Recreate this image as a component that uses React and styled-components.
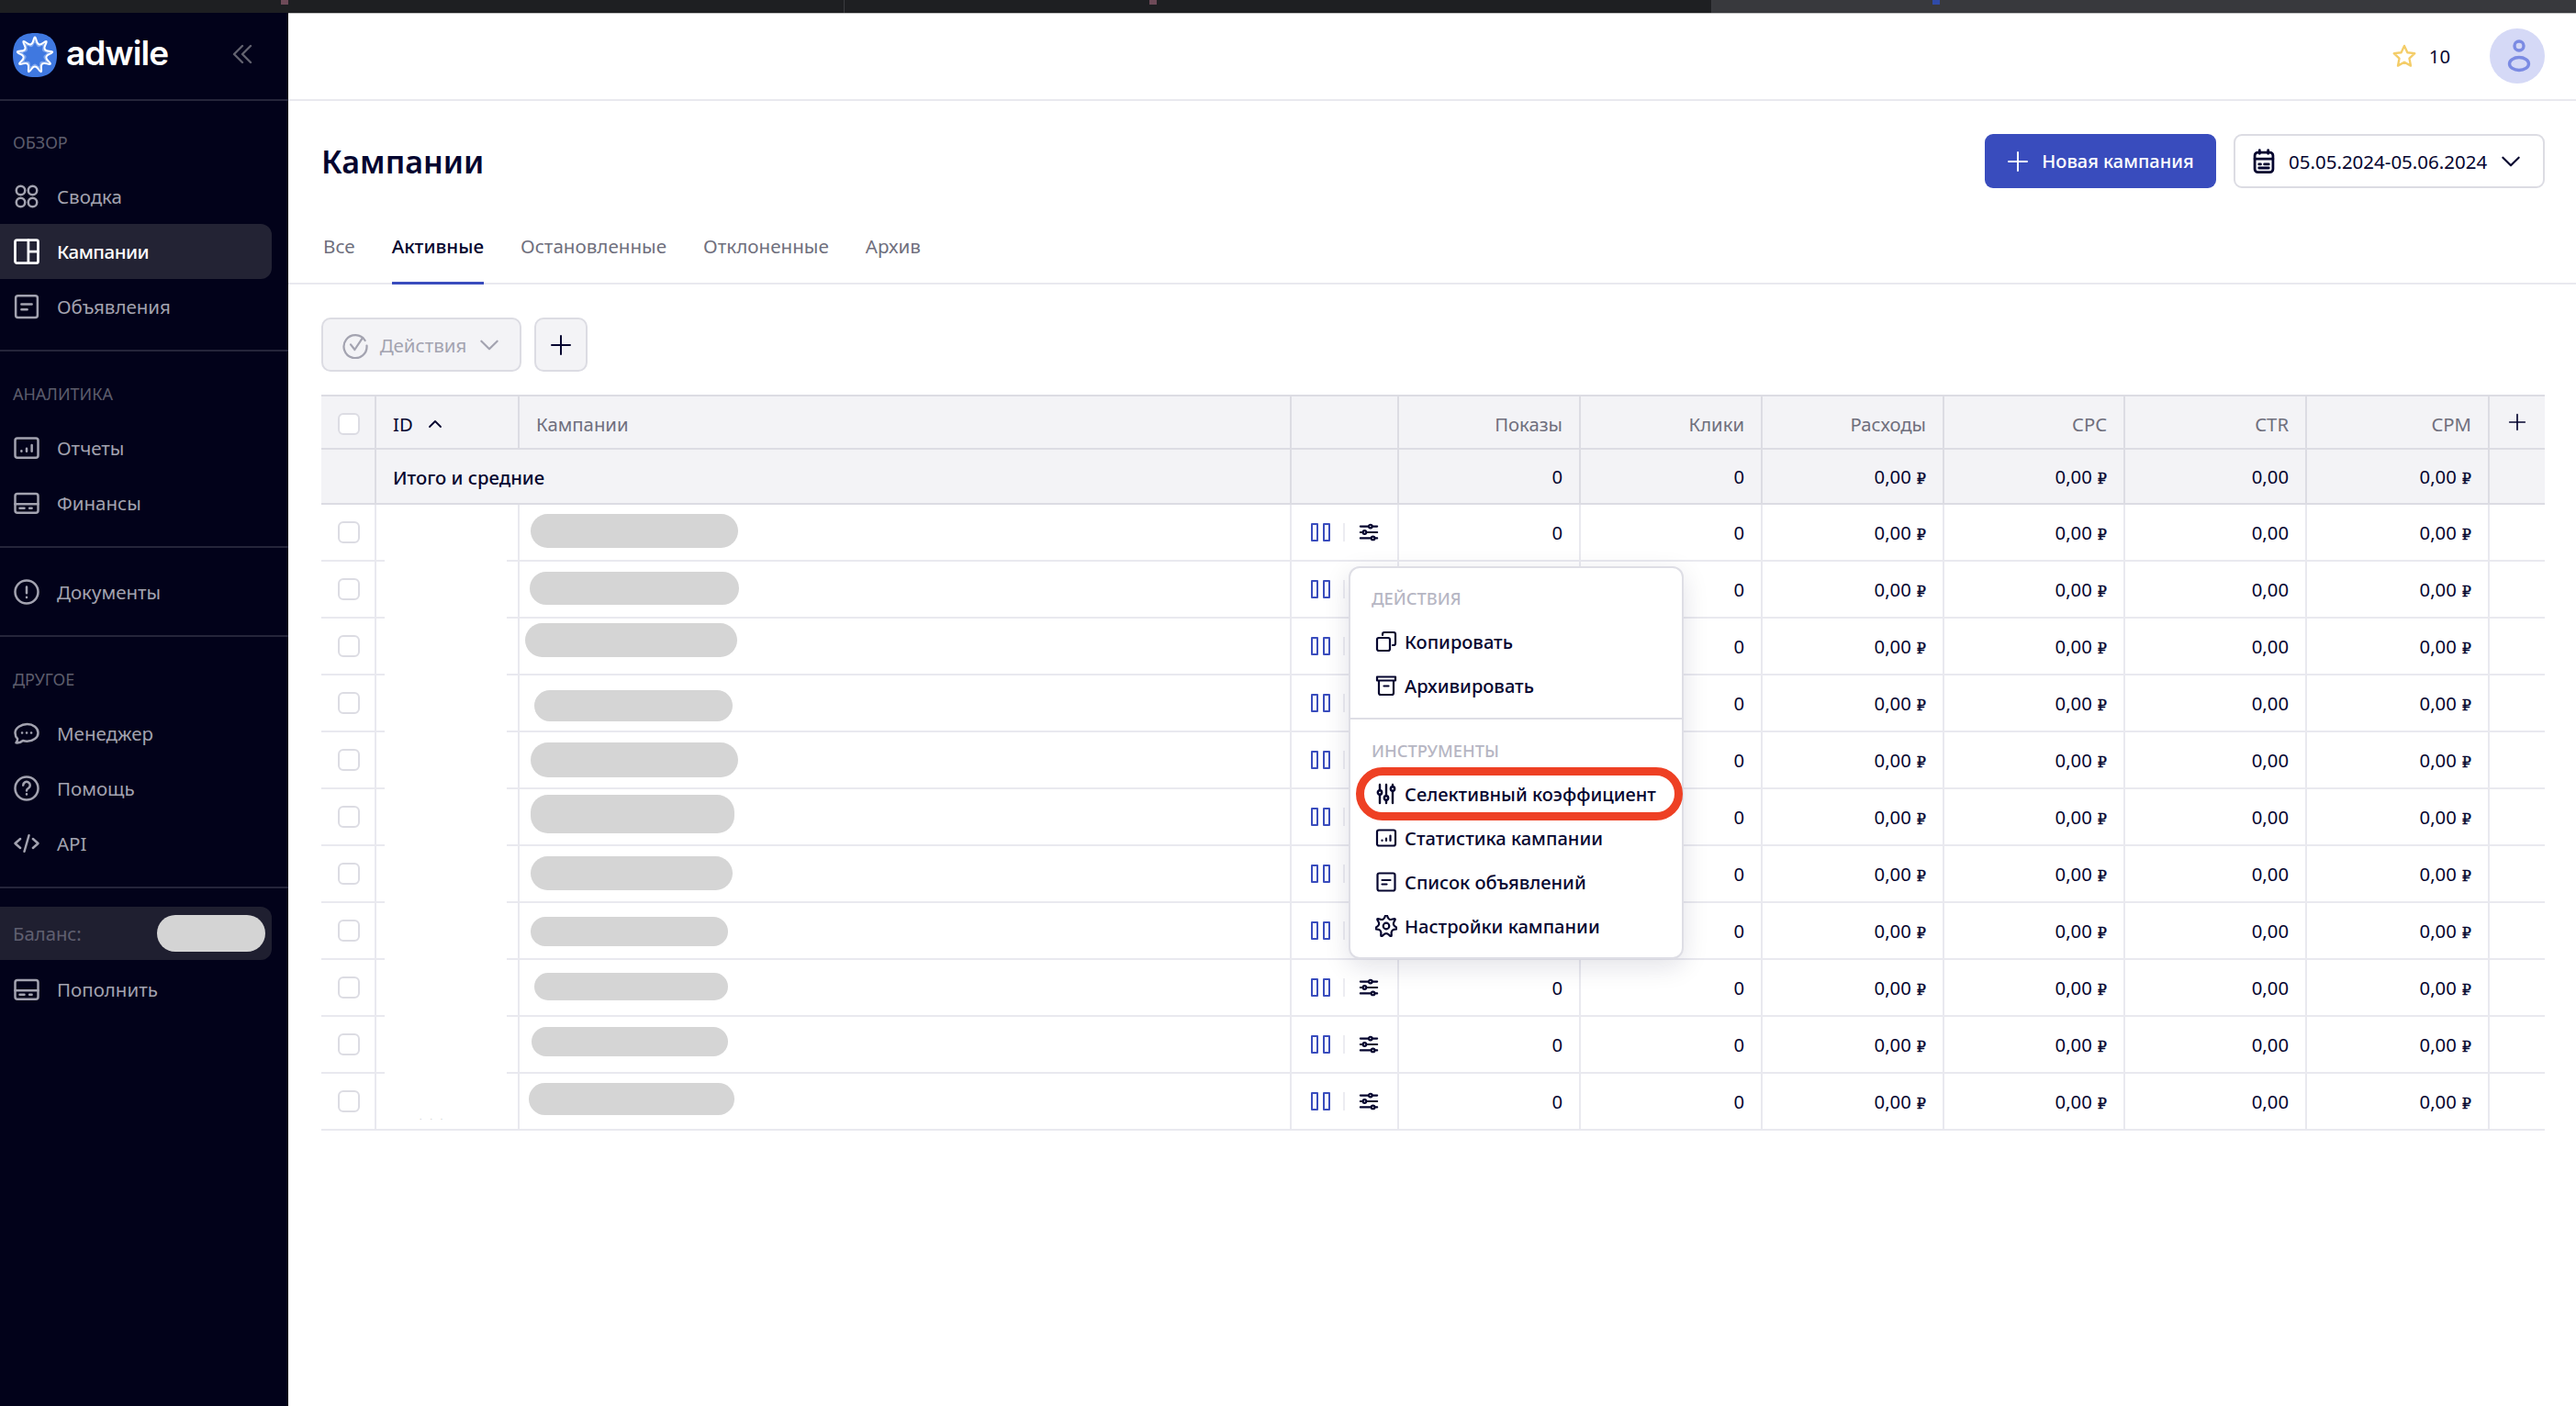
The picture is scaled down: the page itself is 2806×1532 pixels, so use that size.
import React from 'react';
import styled, { createGlobalStyle } from 'styled-components';

const GlobalStyle = createGlobalStyle`
  html, body {
    margin: 0;
    padding: 0;
    background: #ffffff;
  }
  * {
    box-sizing: border-box;
  }
  body {
    font-family: "Noto Sans", "Open Sans", sans-serif;
    font-size: 20.3px;
    color: #05052f;
  }
`;

const Page = styled.div`
  width: 2806px;
  height: 1532px;
  display: flex;
  flex-direction: column;
  overflow: hidden;
`;

const BrowserStrip = styled.div`
  height: 14px;
  flex: none;
  display: grid;
  grid-template-columns: 920px 945px 1fr;
`;

const BrowserTab = styled.div`
  padding-left: ${p => p.$markAt}px;
  background: ${p => (p.$light ? '#38393d' : '#1e1f22')};
  border-right: 1px solid #3a3b3f;
`;

const TabMark = styled.div`
  width: 8px;
  height: 5px;
  background: ${p => p.$color};
`;

const Body = styled.div`
  flex: 1;
  display: flex;
  min-height: 0;
`;

const Sidebar = styled.aside`
  width: 314px;
  flex: none;
  background: #02021a;
  color: #a3a3b0;
`;

const LogoBar = styled.div`
  height: 96px;
  padding: 22px 39px 0 14px;
  display: flex;
  align-items: flex-start;
  border-bottom: 2px solid #25253a;
`;

const Wordmark = styled.span`
  margin-left: 10px;
  font-family: "Inter", sans-serif;
  font-size: 37px;
  line-height: 44px;
  font-weight: 600;
  letter-spacing: -0.9px;
  color: #ffffff;
`;

const Collapse = styled.div`
  margin-left: auto;
  margin-top: 12px;
  color: #62626f;
  display: flex;
`;

const NavSection = styled.div`
  padding: ${p => p.$top}px 0 17px;
  border-bottom: 2px solid #25253a;
`;

const NavLabel = styled.div`
  height: 28px;
  margin-bottom: 15px;
  padding-left: 14px;
  font-size: 18px;
  line-height: 28px;
  color: #5d5d6c;
`;

const NavItem = styled.div`
  width: 296px;
  height: 60px;
  padding-left: 14px;
  display: flex;
  align-items: center;
  gap: 18px;
  font-size: 20.5px;
  font-weight: ${p => (p.$active ? 500 : 400)};
  letter-spacing: ${p => (p.$active ? '-0.5px' : '0')};
  color: ${p => (p.$active ? '#ffffff' : '#a3a3b0')};
  background: ${p => (p.$active ? '#232334' : 'transparent')};
  border-radius: 0 12px 12px 0;
`;

const BalanceRow = styled.div`
  width: 296px;
  height: 58px;
  margin: 20px 0 2px;
  padding: 0 7px 0 14px;
  display: flex;
  align-items: center;
  justify-content: space-between;
  background: #1f1f30;
  border-radius: 0 12px 12px 0;
  color: #5f5f70;
`;

const BalancePill = styled.div`
  width: 118px;
  height: 40px;
  background: #d4d4d4;
  border-radius: 20px;
`;

const Main = styled.main`
  flex: 1;
  min-width: 0;
`;

const TopBar = styled.div`
  height: 96px;
  padding-right: 34px;
  display: flex;
  align-items: center;
  justify-content: flex-end;
  border-bottom: 2px solid #e9e9ef;
  box-shadow: inset 0 1px 0 #c4c4c4;
`;

const Points = styled.div`
  display: flex;
  align-items: center;
  gap: 13px;
  margin-right: 43px;
`;

const Avatar = styled.div`
  width: 60px;
  height: 60px;
  padding-left: 4px;
  border-radius: 50%;
  background: #d5d9f6;
  display: flex;
  align-items: center;
  justify-content: center;
  color: #7b8be3;
`;

const PageHead = styled.div`
  height: 95px;
  padding: 36px 34px 0 36px;
  display: flex;
  align-items: flex-start;
  gap: 19px;
`;

const Title = styled.h1`
  margin: 0 auto 0 0;
  font-size: 34px;
  line-height: 60px;
  font-weight: 600;
  color: #05052f;
`;

const PrimaryButton = styled.button`
  width: 252px;
  height: 59px;
  border: 0;
  border-radius: 9px;
  background: #394cbd;
  color: #ffffff;
  font: 500 20px "Noto Sans", sans-serif;
  display: flex;
  align-items: center;
  justify-content: center;
  gap: 14px;
`;

const DateButton = styled.button`
  width: 339px;
  height: 59px;
  padding: 0 0 0 17px;
  border: 2px solid #dcdce3;
  border-radius: 9px;
  background: #ffffff;
  color: #05052f;
  font: 400 20.5px "Noto Sans", sans-serif;
  display: flex;
  align-items: center;
  gap: 13px;
`;

const Tabs = styled.div`
  height: 105px;
  padding-left: 38px;
  display: flex;
  align-items: flex-end;
  gap: 40px;
  border-bottom: 2px solid #e9e9ef;
`;

const Tab = styled.div`
  height: 67px;
  margin-bottom: -2px;
  font-size: 20.6px;
  line-height: 50px;
  color: ${p => (p.$active ? '#05052f' : '#6f6f7d')};
  font-weight: ${p => (p.$active ? 500 : 400)};
  border-bottom: 3px solid ${p => (p.$active ? '#394cbd' : 'transparent')};
`;

const Toolbar = styled.div`
  margin: 36px 0 25px 36px;
  display: flex;
  gap: 14px;
`;

const ToolButton = styled.button`
  width: ${p => p.$width}px;
  height: 59px;
  padding: 0;
  border: 2px solid #dcdce3;
  border-radius: 10px;
  background: #f3f3f6;
  color: ${p => (p.$dark ? '#05052f' : '#a3a3b0')};
  font: 400 20.5px "Noto Sans", sans-serif;
  display: flex;
  align-items: center;
  justify-content: center;
  gap: 12px;
`;

const Table = styled.div`
  position: relative;
  width: 2422px;
  margin-left: 36px;
  border-top: 2px solid #dcdce3;
`;

const Row = styled.div`
  display: grid;
  grid-template-columns: 60px 156px 841px 117px 198px 198px 198px 197px 198px 199px 60px;
  height: ${p => p.$height}px;
  background: ${p => (p.$shaded ? '#f3f3f6' : '#ffffff')};
`;

const Cell = styled.div`
  position: relative;
  display: flex;
  align-items: ${p => p.$align || 'center'};
  justify-content: ${p => p.$justify || 'flex-start'};
  padding: ${p => p.$padding || '0'};
  grid-column: span ${p => p.$span || 1};
  border-right: ${p => (p.$last ? '0' : `2px solid ${p.$shaded ? '#dcdce3' : '#e9e9ef'}`)};
  border-bottom: 2px solid ${p => (p.$shaded ? '#dcdce3' : '#e9e9ef')};
`;

const MaskedCell = styled(Cell)`
  &::after {
    content: ${p => (p.$masked ? '""' : 'none')};
    position: absolute;
    left: 9px;
    right: 12px;
    bottom: -2px;
    height: 2px;
    background: #ffffff;
  }
`;

const NumberCell = styled(Cell).attrs({ $justify: 'flex-end', $padding: '0 18px 0 0' })``;

const CheckCell = styled(Cell).attrs({ $justify: 'center' })`
  padding: ${p => (p.$raised ? '4px 0 0 2px' : '0 0 0 2px')};
`;

const HeadLabel = styled.span`
  padding-top: 4px;
  color: ${p => (p.$dark ? '#05052f' : '#6f6f7d')};
`;

const SortMark = styled.span`
  display: flex;
  margin-left: 15px;
  padding-top: 3px;
`;

const TotalLabel = styled.span`
  padding-top: 2px;
  font-weight: 500;
`;

const CheckBox = styled.div`
  width: 24px;
  height: 24px;
  border: 2px solid #dcdce3;
  border-radius: 6px;
  background: #ffffff;
`;

const Pill = styled.div`
  margin: ${p => p.$top}px 0 0 ${p => p.$left}px;
  width: ${p => p.$width}px;
  height: ${p => p.$height}px;
  background: #d5d5d5;
  border-radius: 19px;
`;

const FaintDots = styled.span`
  margin: 0 0 8px 47px;
  font-size: 9px;
  line-height: 10px;
  letter-spacing: 9px;
  color: #c9c9c9;
`;

const RowActions = styled.div`
  display: flex;
  align-items: center;
  padding-left: 21px;
  width: 100%;
`;

const PauseIcon = styled.div`
  display: flex;
  gap: 5px;
  &::before,
  &::after {
    content: "";
    box-sizing: border-box;
    width: 8px;
    height: 20px;
    border: 2px solid #394cbd;
    border-radius: 1px;
  }
`;

const ActionSep = styled.div`
  width: 2px;
  height: 20px;
  margin: 0 15px 0 14px;
  background: #ececf1;
`;

const Ruble = styled.span`
  margin-left: 6px;
  font-family: "DejaVu Serif", "Liberation Serif", serif;
  font-size: 16px;
  font-weight: 400;
  -webkit-text-stroke: 0.4px #05052f;
`;

const Menu = styled.div`
  position: absolute;
  left: 1119px;
  top: 185px;
  width: 365px;
  background: #ffffff;
  border: 2px solid #dedee5;
  border-radius: 12px;
  box-shadow: 0 8px 28px rgba(20, 20, 60, 0.12);
`;

const MenuGroup = styled.div`
  padding: ${p => p.$top}px 0 ${p => p.$bottom}px;
  border-bottom: ${p => (p.$divider ? '2px solid #dedee5' : '0')};
`;

const MenuLabel = styled.div`
  height: 28px;
  margin-bottom: 9px;
  padding-left: 23px;
  font-size: 18.3px;
  line-height: 28px;
  font-weight: 500;
  color: #b6b6c3;
`;

const MenuItem = styled.div`
  position: relative;
  height: 48px;
  padding-left: 27px;
  display: flex;
  align-items: center;
  gap: 8px;
  font-size: 20.1px;
  font-weight: 500;
  color: #05052f;
`;

const Highlight = styled.div`
  position: absolute;
  left: 6px;
  right: -1px;
  top: -5px;
  bottom: -5px;
  border: 9px solid #ee4024;
  border-radius: 29px;
`;

const Svg = ({ size = 30, width = 2, children }) => (
  <svg
    width={size}
    height={size}
    viewBox="0 0 24 24"
    fill="none"
    stroke="currentColor"
    strokeWidth={width}
    strokeLinecap="round"
    strokeLinejoin="round"
  >
    {children}
  </svg>
);

// smooth wavy outline, used for the logo burst and the settings gear
const wavyPath = (cx, cy, outer, inner, lobes, turn = 0) => {
  const points = [];
  for (let i = 0; i < lobes * 2; i++) {
    const angle = turn + (Math.PI * i) / lobes;
    const radius = i % 2 ? inner : outer;
    points.push([cx + radius * Math.cos(angle), cy + radius * Math.sin(angle)]);
  }
  const mid = (a, b) => [(a[0] + b[0]) / 2, (a[1] + b[1]) / 2];
  const start = mid(points[points.length - 1], points[0]);
  let d = `M${start[0].toFixed(2)} ${start[1].toFixed(2)}`;
  points.forEach((point, i) => {
    const end = mid(point, points[(i + 1) % points.length]);
    d += `Q${point[0].toFixed(2)} ${point[1].toFixed(2)} ${end[0].toFixed(2)} ${end[1].toFixed(2)}`;
  });
  return d + 'Z';
};

const OverviewIcon = () => (
  <Svg>
    <circle cx="6.800" cy="6.800" r="3.800" />
    <circle cx="17.200" cy="6.800" r="3.800" />
    <circle cx="6.800" cy="17.200" r="3.800" />
    <circle cx="17.200" cy="17.200" r="3.800" />
  </Svg>
);

const CampaignsIcon = () => (
  <Svg width={2.200}>
    <rect x="2" y="2" width="20" height="20" rx="1.500" />
    <path d="M13.500 2v20M13.500 12H22" />
  </Svg>
);

const AdsIcon = ({ size, width }) => (
  <Svg size={size} width={width}>
    <rect x="2.500" y="2.500" width="19" height="19" rx="2" />
    <path d="M7.500 10h9M7.500 14.500h5" />
  </Svg>
);

const ReportsIcon = ({ size, width }) => (
  <Svg size={size} width={width}>
    <rect x="2" y="3.500" width="20" height="17" rx="2" />
    <path d="M7.500 14.500v.5M12 12.500v2.500M16.500 9.500V15" />
  </Svg>
);

const CardIcon = () => (
  <Svg>
    <rect x="2" y="4" width="20" height="16.500" rx="2" />
    <path d="M2 13h20M6 16.500h4M14.500 16.500h2" />
  </Svg>
);

const DocsIcon = () => (
  <Svg>
    <circle cx="12" cy="12" r="10" />
    <path d="M12 7.500v5.500M12 16.500v.2" />
  </Svg>
);

const ManagerIcon = () => (
  <Svg>
    <path d="M12.500 4c5.200 0 9.500 3.300 9.500 7.500S17.700 19 12.500 19c-1.300 0-2.600-.2-3.700-.6C7 20 4.500 20.500 2.800 20.300c.7-.9 1.200-2 1.300-3.400C2.800 15.500 2 13.600 2 11.500 2 7.300 7.300 4 12.500 4z" />
    <path d="M8 11.500h.1M12 11.500h.1M16 11.500h.1" />
  </Svg>
);

const HelpIcon = () => (
  <Svg>
    <circle cx="12" cy="12" r="10" />
    <path d="M9 9.300a3 3 0 1 1 4.600 2.500c-1 .6-1.600 1.200-1.600 2.200M12 17v.2" />
  </Svg>
);

const ApiIcon = () => (
  <Svg>
    <path d="M6.500 8l-4.500 4 4.500 4M17.500 8l4.500 4-4.500 4M14 5l-4 14" />
  </Svg>
);

const CollapseIcon = () => (
  <svg width="22" height="22" viewBox="0 0 22 22" fill="none" stroke="currentColor" strokeWidth="2.400" strokeLinecap="round" strokeLinejoin="round">
    <path d="M11 2L2 11l9 9M20 2l-9 9 9 9" />
  </svg>
);

const Logo = () => (
  <svg width="48" height="48" viewBox="0 0 48 48">
    <path d="M24 0C40 0 48 8 48 24S40 48 24 48 0 40 0 24 8 0 24 0z" fill="#3f78e0" />
    <path d={wavyPath(24, 24, 23, 9.500, 9, -1.570)} fill="#7ea6ee" stroke="#ffffff" strokeWidth="2" strokeLinejoin="round" />
    <path d={wavyPath(24, 24, 15, 8, 9, -1.570)} fill="#3f78e0" />
  </svg>
);

const StarIcon = () => (
  <svg width="28" height="28" viewBox="0 0 24 24" fill="none" stroke="#f4cd68" strokeWidth="2" strokeLinejoin="round">
    <path d="M12 2.500l2.900 6.300 6.800.8-5 4.700 1.300 6.800-6-3.400-6 3.400 1.300-6.800-5-4.700 6.800-.8z" />
  </svg>
);

const UserIcon = () => (
  <svg width="30" height="46" viewBox="0 0 30 46" fill="none" stroke="currentColor" strokeWidth="3.400">
    <ellipse cx="15" cy="12" rx="5" ry="5" />
    <ellipse cx="15" cy="31.500" rx="10.500" ry="7" />
  </svg>
);

const PlusIcon = ({ size = 24 }) => (
  <Svg size={size} width={2}>
    <path d="M12 2v20M2 12h20" />
  </Svg>
);

const Chevron = ({ up, size = 26, width = 2 }) => (
  <Svg size={size} width={width}>
    <path d={up ? 'M4 16l8-8 8 8' : 'M4 8l8 8 8-8'} />
  </Svg>
);

const CalendarIcon = () => (
  <Svg size={28} width={2.400}>
    <rect x="3.500" y="3.500" width="17" height="18.500" rx="3" />
    <path d="M3.500 9.500h17M8 1.500v3M16 1.500v3M7.500 14.500h1.500M12.500 14.500h4M7.500 18h9" />
  </Svg>
);

const CheckCircleIcon = () => (
  <Svg size={30} width={1.800}>
    <path d="M20.500 8A10 10 0 1 0 22 12.500" />
    <path d="M8 11.500l3.500 4.500 7-10.500" />
  </Svg>
);

const TuneIcon = () => (
  <Svg size={22} width={2.300}>
    <path d="M2 5h10M16 5h6M2 12h3M9 12h13M2 19h13M19 19h3" />
    <circle cx="14" cy="5" r="2" />
    <circle cx="7" cy="12" r="2" />
    <circle cx="17" cy="19" r="2" />
  </Svg>
);

const CopyIcon = () => (
  <Svg size={24} width={2.200}>
    <rect x="2" y="8" width="14" height="14" rx="2" />
    <path d="M8 5V4a2 2 0 0 1 2-2h10a2 2 0 0 1 2 2v10a2 2 0 0 1-2 2h-1" />
  </Svg>
);

const ArchiveIcon = () => (
  <Svg size={24} width={2.200}>
    <path d="M2 2.500h20v4H2zM4 6.500V20a2 2 0 0 0 2 2h12a2 2 0 0 0 2-2V6.500M9.500 12.500h5" />
  </Svg>
);

const SlidersIcon = () => (
  <Svg size={24} width={2.400}>
    <path d="M5 2v6M5 13v9M12 2v12M12 19v3M19 2v2M19 9v13" />
    <circle cx="5" cy="10.500" r="2.200" />
    <circle cx="12" cy="16.500" r="2.200" />
    <circle cx="19" cy="6.500" r="2.200" />
  </Svg>
);

const GearIcon = () => (
  <Svg size={24} width={2.200}>
    <path d={wavyPath(12, 12, 14.500, 6.500, 7, -1.570)} />
    <circle cx="12" cy="12" r="3.300" />
  </Svg>
);

const pills = [
  { x: 12, y: 10, w: 226, h: 37 },
  { x: 11, y: 11, w: 228, h: 36 },
  { x: 6, y: 5, w: 231, h: 37 },
  { x: 16, y: 16, w: 216, h: 34 },
  { x: 12, y: 11, w: 226, h: 38 },
  { x: 12, y: 6, w: 222, h: 42 },
  { x: 12, y: 11, w: 220, h: 37 },
  { x: 12, y: 15, w: 215, h: 32 },
  { x: 16, y: 14, w: 211, h: 30 },
  { x: 13, y: 11, w: 214, h: 32 },
  { x: 10, y: 10, w: 224, h: 35 },
];

const metrics = ['Показы', 'Клики', 'Расходы', 'CPC', 'CTR', 'CPM'];
const values = [
  { text: '0' },
  { text: '0' },
  { text: '0,00', rub: true },
  { text: '0,00', rub: true },
  { text: '0,00' },
  { text: '0,00', rub: true },
];

const sections = [
  {
    top: 31,
    label: 'ОБЗОР',
    items: [
      { icon: <OverviewIcon />, text: 'Сводка' },
      { icon: <CampaignsIcon />, text: 'Кампании', active: true },
      { icon: <AdsIcon />, text: 'Объявления' },
    ],
  },
  {
    top: 32,
    label: 'АНАЛИТИКА',
    items: [
      { icon: <ReportsIcon />, text: 'Отчеты' },
      { icon: <CardIcon />, text: 'Финансы' },
    ],
  },
  {
    top: 18,
    items: [{ icon: <DocsIcon />, text: 'Документы' }],
  },
  {
    top: 32,
    label: 'ДРУГОЕ',
    items: [
      { icon: <ManagerIcon />, text: 'Менеджер' },
      { icon: <HelpIcon />, text: 'Помощь' },
      { icon: <ApiIcon />, text: 'API' },
    ],
  },
];

const tabs = ['Все', 'Активные', 'Остановленные', 'Отклоненные', 'Архив'];

const Amount = ({ value }) => (
  <span>
    {value.text}
    {value.rub ? <Ruble>₽</Ruble> : null}
  </span>
);

const CampaignRow = ({ pill, isLast }) => (
  <Row $height={62}>
    <CheckCell><CheckBox /></CheckCell>
    <MaskedCell $masked={!isLast} $align="flex-end">
      {isLast ? <FaintDots>...</FaintDots> : null}
    </MaskedCell>
    <Cell $align="flex-start">
      <Pill $left={pill.x} $top={pill.y} $width={pill.w} $height={pill.h} />
    </Cell>
    <Cell>
      <RowActions>
        <PauseIcon />
        <ActionSep />
        <TuneIcon />
      </RowActions>
    </Cell>
    {values.map((value, i) => (
      <NumberCell key={i}><Amount value={value} /></NumberCell>
    ))}
    <Cell $last />
  </Row>
);

const App = () => {
  return (
    <Page>
      <GlobalStyle />
      <BrowserStrip>
        <BrowserTab $markAt={306}><TabMark $color="#6e4a58" /></BrowserTab>
        <BrowserTab $markAt={332}><TabMark $color="#6e4a58" /></BrowserTab>
        <BrowserTab $light $markAt={240}><TabMark $color="#2f4aa8" /></BrowserTab>
      </BrowserStrip>
      <Body>
        <Sidebar>
          <LogoBar>
            <Logo />
            <Wordmark>adwile</Wordmark>
            <Collapse><CollapseIcon /></Collapse>
          </LogoBar>
          {sections.map((section, i) => (
            <NavSection key={i} $top={section.top}>
              {section.label ? <NavLabel>{section.label}</NavLabel> : null}
              {section.items.map(item => (
                <NavItem key={item.text} $active={item.active}>
                  {item.icon}
                  {item.text}
                </NavItem>
              ))}
            </NavSection>
          ))}
          <BalanceRow>
            Баланс:
            <BalancePill />
          </BalanceRow>
          <NavItem><CardIcon />Пополнить</NavItem>
        </Sidebar>
        <Main>
          <TopBar>
            <Points>
              <StarIcon />
              10
            </Points>
            <Avatar><UserIcon /></Avatar>
          </TopBar>
          <PageHead>
            <Title>Кампании</Title>
            <PrimaryButton><PlusIcon />Новая кампания</PrimaryButton>
            <DateButton>
              <CalendarIcon />
              05.05.2024-05.06.2024
              <Chevron />
            </DateButton>
          </PageHead>
          <Tabs>
            {tabs.map(tab => (
              <Tab key={tab} $active={tab === 'Активные'}>{tab}</Tab>
            ))}
          </Tabs>
          <Toolbar>
            <ToolButton $width={218}>
              <CheckCircleIcon />
              Действия
              <Chevron />
            </ToolButton>
            <ToolButton $width={58} $dark>
              <PlusIcon />
            </ToolButton>
          </Toolbar>
          <Table>
            <Row $height={58} $shaded>
              <CheckCell $shaded $raised><CheckBox /></CheckCell>
              <Cell $shaded $padding="0 0 0 18px">
                <HeadLabel $dark>ID</HeadLabel>
                <SortMark><Chevron up size={18} width={2.400} /></SortMark>
              </Cell>
              <Cell $shaded $padding="0 0 0 18px"><HeadLabel>Кампании</HeadLabel></Cell>
              <Cell $shaded />
              {metrics.map(metric => (
                <NumberCell key={metric} $shaded><HeadLabel>{metric}</HeadLabel></NumberCell>
              ))}
              <Cell $shaded $last $justify="center"><PlusIcon size={20} /></Cell>
            </Row>
            <Row $height={60} $shaded>
              <Cell $shaded />
              <Cell $shaded $span={2} $padding="0 0 0 18px"><TotalLabel>Итого и средние</TotalLabel></Cell>
              <Cell $shaded />
              {values.map((value, i) => (
                <NumberCell key={i} $shaded><Amount value={value} /></NumberCell>
              ))}
              <Cell $shaded $last />
            </Row>
            {pills.map((pill, i) => (
              <CampaignRow key={i} pill={pill} isLast={i === pills.length - 1} />
            ))}
            <Menu>
              <MenuGroup $top={19} $bottom={11} $divider>
                <MenuLabel>ДЕЙСТВИЯ</MenuLabel>
                <MenuItem><CopyIcon />Копировать</MenuItem>
                <MenuItem><ArchiveIcon />Архивировать</MenuItem>
              </MenuGroup>
              <MenuGroup $top={20} $bottom={10}>
                <MenuLabel>ИНСТРУМЕНТЫ</MenuLabel>
                <MenuItem>
                  <SlidersIcon />
                  Селективный коэффициент
                  <Highlight />
                </MenuItem>
                <MenuItem><ReportsIcon size={24} width={2.200} />Статистика кампании</MenuItem>
                <MenuItem><AdsIcon size={24} width={2.200} />Список объявлений</MenuItem>
                <MenuItem><GearIcon />Настройки кампании</MenuItem>
              </MenuGroup>
            </Menu>
          </Table>
        </Main>
      </Body>
    </Page>
  );
};

export default App;
